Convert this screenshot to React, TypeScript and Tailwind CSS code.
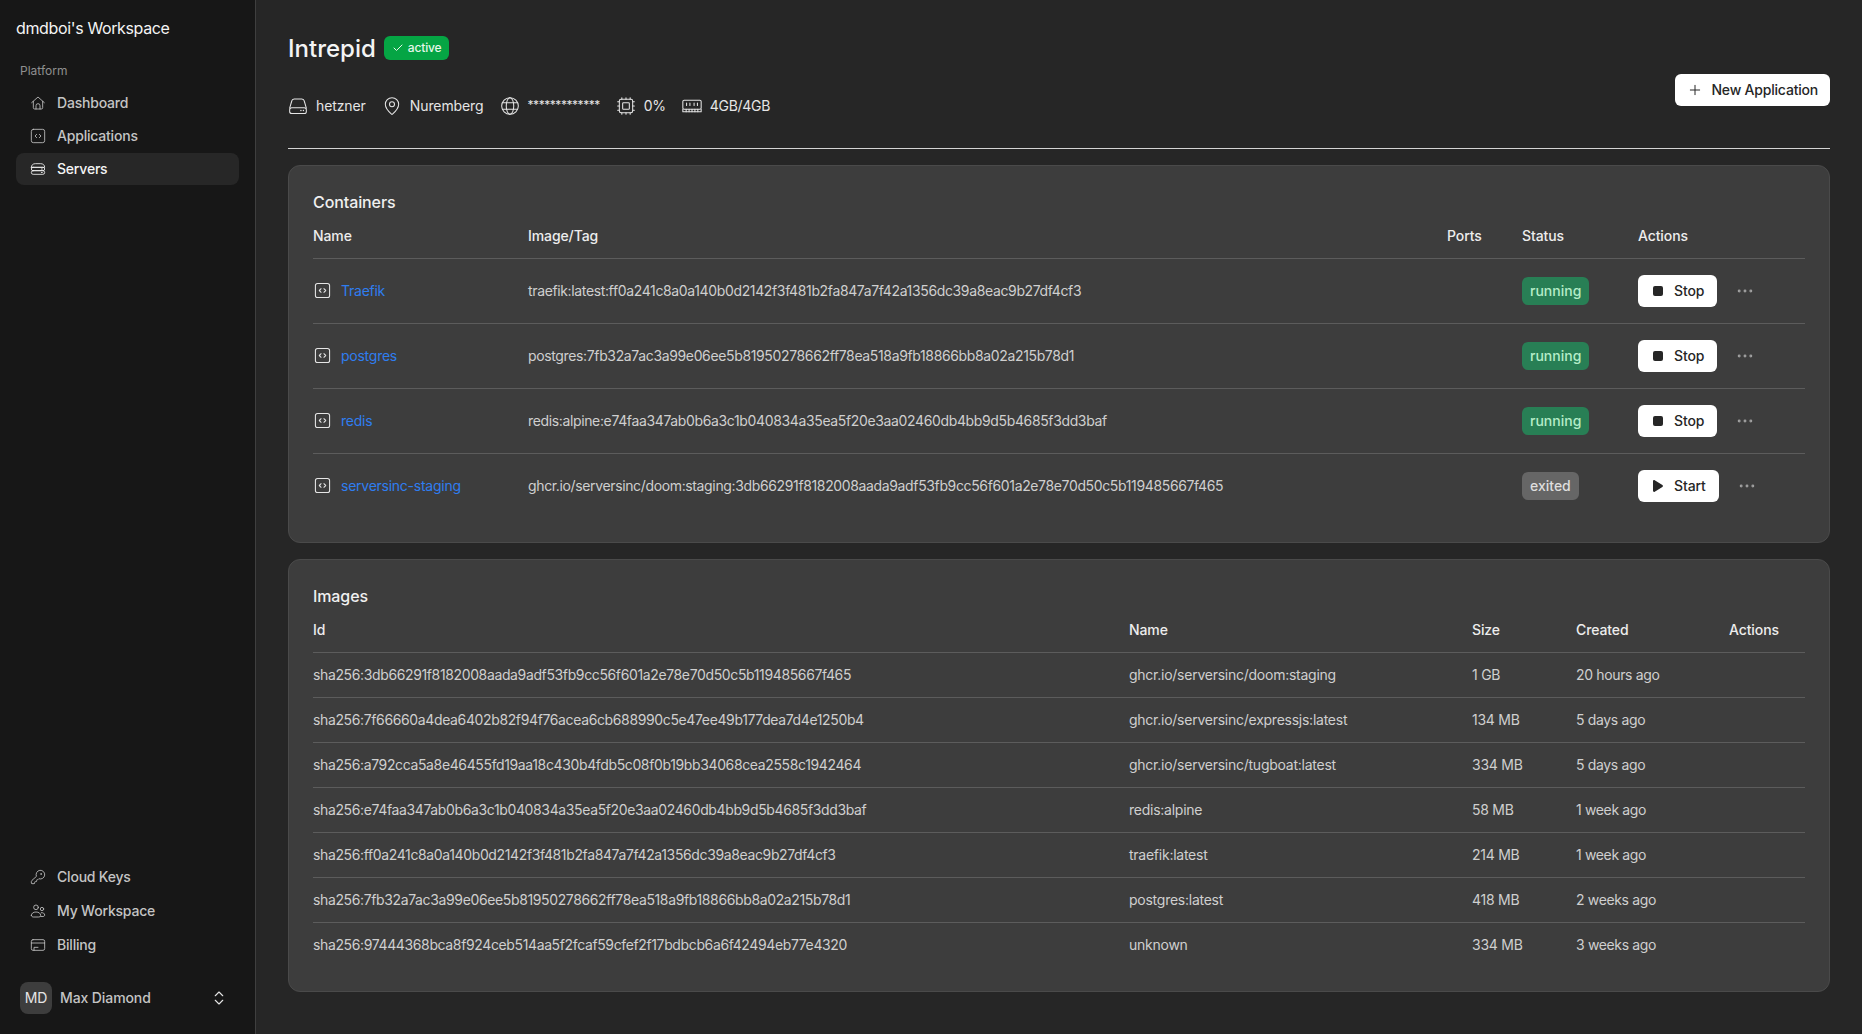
import React from 'react';
import { KeyRound, ChevronsUpDown, MapPin, Cpu, Check, Plus, Ellipsis } from 'lucide-react';

interface ContainerRow {
  name: string;
  image: string;
  status: 'running' | 'exited';
}

interface ImageRow {
  id: string;
  name: string;
  size: string;
  created: string;
}

const containers: ContainerRow[] = [
  { name: 'Traefik', image: 'traefik:latest:ff0a241c8a0a140b0d2142f3f481b2fa847a7f42a1356dc39a8eac9b27df4cf3', status: 'running' },
  { name: 'postgres', image: 'postgres:7fb32a7ac3a99e06ee5b81950278662ff78ea518a9fb18866bb8a02a215b78d1', status: 'running' },
  { name: 'redis', image: 'redis:alpine:e74faa347ab0b6a3c1b040834a35ea5f20e3aa02460db4bb9d5b4685f3dd3baf', status: 'running' },
  { name: 'serversinc-staging', image: 'ghcr.io/serversinc/doom:staging:3db66291f8182008aada9adf53fb9cc56f601a2e78e70d50c5b119485667f465', status: 'exited' },
];

const images: ImageRow[] = [
  { id: 'sha256:3db66291f8182008aada9adf53fb9cc56f601a2e78e70d50c5b119485667f465', name: 'ghcr.io/serversinc/doom:staging', size: '1 GB', created: '20 hours ago' },
  { id: 'sha256:7f66660a4dea6402b82f94f76acea6cb688990c5e47ee49b177dea7d4e1250b4', name: 'ghcr.io/serversinc/expressjs:latest', size: '134 MB', created: '5 days ago' },
  { id: 'sha256:a792cca5a8e46455fd19aa18c430b4fdb5c08f0b19bb34068cea2558c1942464', name: 'ghcr.io/serversinc/tugboat:latest', size: '334 MB', created: '5 days ago' },
  { id: 'sha256:e74faa347ab0b6a3c1b040834a35ea5f20e3aa02460db4bb9d5b4685f3dd3baf', name: 'redis:alpine', size: '58 MB', created: '1 week ago' },
  { id: 'sha256:ff0a241c8a0a140b0d2142f3f481b2fa847a7f42a1356dc39a8eac9b27df4cf3', name: 'traefik:latest', size: '214 MB', created: '1 week ago' },
  { id: 'sha256:7fb32a7ac3a99e06ee5b81950278662ff78ea518a9fb18866bb8a02a215b78d1', name: 'postgres:latest', size: '418 MB', created: '2 weeks ago' },
  { id: 'sha256:97444368bca8f924ceb514aa5f2fcaf59cfef2f17bdbcb6a6f42494eb77e4320', name: 'unknown', size: '334 MB', created: '3 weeks ago' },
];

type IconProps = { size?: number; strokeWidth?: number; className?: string };

const Svg: React.FC<IconProps & { children: React.ReactNode }> = ({ size = 16, strokeWidth = 1.25, className, children }) => (
  <svg
    width={size}
    height={size}
    viewBox="0 0 24 24"
    fill="none"
    stroke="currentColor"
    strokeWidth={strokeWidth}
    strokeLinecap="round"
    strokeLinejoin="round"
    className={className}
  >
    {children}
  </svg>
);

const HomeIcon: React.FC<IconProps> = (p) => (
  <Svg {...p}>
    <path d="M2.5 11.5 12 3l9.5 8.5" />
    <path d="M5 9.5V19a2 2 0 0 0 2 2h10a2 2 0 0 0 2-2V9.5" />
    <path d="M9 21v-5a3 3 0 0 1 6 0v5" />
  </Svg>
);

const CodeBoxIcon: React.FC<IconProps> = (p) => (
  <Svg {...p}>
    <rect x="2" y="2" width="20" height="20" rx="3" />
    <path d="m10 9.5-2.5 2.5 2.5 2.5" />
    <path d="m14 9.5 2.5 2.5-2.5 2.5" />
  </Svg>
);

const ServerStackIcon: React.FC<IconProps> = (p) => (
  <Svg {...p}>
    <path d="M2 9.5C2 6 4.5 4 8 4h8c3.500 0 6 2 6 5.500H2Z" />
    <rect x="2" y="9.500" width="20" height="5" rx="2.500" />
    <rect x="2" y="14.500" width="20" height="5.500" rx="2.750" />
    <path d="M17 12h1.500M17 17.250h1.500" />
  </Svg>
);

const UsersIcon: React.FC<IconProps> = (p) => (
  <Svg {...p}>
    <circle cx="9" cy="6.500" r="3.500" />
    <circle cx="18" cy="9" r="2.500" />
    <path d="M2 18.500c0-3 3-5 7-5s7 2 7 5c0 1.500-1.500 2.500-3 2.500H5c-1.500 0-3-1-3-2.500Z" />
    <path d="M17 14.500c2.800-.3 5 1.200 5 3.500 0 1.300-1 2.300-2.500 2.300H16" />
  </Svg>
);

const CardIcon: React.FC<IconProps> = (p) => (
  <Svg {...p}>
    <rect x="2" y="4" width="20" height="16" rx="2.500" />
    <path d="M2 9h20" />
    <path d="M6 20v-4.500h6" />
  </Svg>
);

const DriveIcon: React.FC<IconProps> = (p) => (
  <Svg {...p}>
    <path d="M2 14.500 4.500 6A3 3 0 0 1 7.400 3.500h9.200A3 3 0 0 1 19.500 6L22 14.500" />
    <rect x="2" y="14" width="20" height="7" rx="2.500" />
    <path d="M15.500 17.500h.01M18.500 17.500h.01" strokeWidth={1.75} />
  </Svg>
);

const GlobeIcon: React.FC<IconProps> = (p) => (
  <Svg {...p}>
    <circle cx="12" cy="12" r="10" />
    <ellipse cx="12" cy="12" rx="4.500" ry="10" />
    <path d="M3 8h18M3 16h18" />
  </Svg>
);

const RamIcon: React.FC<IconProps> = (p) => (
  <Svg {...p}>
    <rect x="1" y="5" width="22" height="11" rx="1.500" />
    <path d="M1 16v3h22v-3" />
    <path d="M5.500 8.500v3M9.500 8.500v3M14.500 8.500v3M18.500 8.500v3" />
    <path d="M5 16v3M8.500 16v3M12 16v3M15.500 16v3M19 16v3" />
  </Svg>
);

const NavItem: React.FC<{ icon: React.ElementType; label: string; active?: boolean; tall?: boolean }> = ({ icon: Icon, label, active, tall }) => (
  <a
    className={`flex items-center gap-[11px] rounded-lg px-[14px] text-sm font-medium tracking-[-0.2px] ${tall ? 'h-[34px]' : 'h-[32px]'} ${
      active ? 'bg-[#272727] text-[#f4f4f4]' : 'text-[#c4c4c4]'
    }`}
  >
    <Icon size={16} strokeWidth={1.25} className="shrink-0" />
    {label}
  </a>
);

const Meta: React.FC<{ icon: React.ElementType; children: React.ReactNode }> = ({ icon: Icon, children }) => (
  <div className="flex items-center gap-[8px] text-sm leading-[20px] tracking-[-0.1px] text-[#e5e5e5]">
    <Icon size={20} strokeWidth={1.25} className="shrink-0" />
    {children}
  </div>
);

export default function App() {
  return (
    <div className="flex h-[1034px] w-full overflow-hidden bg-[#262626] font-['Inter',sans-serif] text-[#e5e5e5]">
      {/* Sidebar */}
      <aside className="flex w-[256px] shrink-0 flex-col border-r border-[#3f3f3f] bg-[#171717] pb-[20px]">
        <div className="px-[16px] pt-[17px] text-base leading-[22px] tracking-[-0.36px] text-[#f4f4f4]">dmdboi's Workspace</div>
        <div className="px-[20px] pt-[24px] text-xs leading-[16px] text-[#8f8f8f]">Platform</div>
        <nav className="mt-[8px] flex flex-col gap-px px-[16px]">
          <NavItem icon={HomeIcon} label="Dashboard" />
          <NavItem icon={CodeBoxIcon} label="Applications" />
          <NavItem icon={ServerStackIcon} label="Servers" active />
        </nav>
        <nav className="mt-auto flex flex-col px-[16px]">
          <NavItem icon={KeyRound} label="Cloud Keys" tall />
          <NavItem icon={UsersIcon} label="My Workspace" tall />
          <NavItem icon={CardIcon} label="Billing" tall />
        </nav>
        <div className="mt-[20px] flex items-center px-[20px]">
          <div className="flex h-[32px] w-[32px] items-center justify-center rounded-lg bg-[#3d3d3d] text-sm text-[#e5e5e5]">MD</div>
          <span className="ml-[8px] text-sm font-medium tracking-[-0.1px] text-[#c4c4c4]">Max Diamond</span>
          <ChevronsUpDown size={18} strokeWidth={1.5} className="mr-[7px] ml-auto text-[#e5e5e5]" />
        </div>
      </aside>

      {/* Main */}
      <main className="flex min-w-0 flex-1 flex-col px-[32px] pt-[33px]">
        <header className="flex items-end justify-between border-b border-[#d4d4d4] pb-[32px]">
          <div>
            <div className="flex items-start gap-[8px]">
              <h1 className="pt-[1px] text-2xl leading-[30px] font-medium text-[#f4f4f4]">Intrepid</h1>
              <span className="mt-[3px] flex h-[24px] items-center gap-[4px] rounded-md bg-[#05a544] px-[8px] text-xs font-medium tracking-[-0.15px] text-[#e6f7ea]">
                <Check size={12} strokeWidth={2} />
                active
              </span>
            </div>
            <div className="mt-[32px] flex items-center gap-[16px]">
              <Meta icon={DriveIcon}>hetzner</Meta>
              <Meta icon={MapPin}>Nuremberg</Meta>
              <Meta icon={GlobeIcon}>
                <span className="mb-[3px] text-xs tracking-[-0.45px]">*************</span>
              </Meta>
              <Meta icon={Cpu}>
                <span className="tracking-[-0.3px]">0%</span>
              </Meta>
              <Meta icon={RamIcon}>
                <span className="tracking-[-0.3px]">4GB/4GB</span>
              </Meta>
            </div>
          </div>
          <button className="mb-[10px] flex h-[32px] items-center gap-[8px] rounded-md bg-white px-[12px] text-sm font-medium tracking-[-0.2px] text-[#262626]">
            <Plus size={16} strokeWidth={1.5} />
            New Application
          </button>
        </header>

        <section className="mt-[16px] rounded-xl border border-[#4a4a4a] bg-[#3d3d3d] px-[24px] pt-[24px] pb-[24px]">
          <h2 className="text-base leading-[24px] font-medium tracking-[-0.1px] text-[#f0f0f0]">Containers</h2>
          <table className="w-full table-fixed text-left text-sm">
            <colgroup>
              <col className="w-[215px]" />
              <col />
              <col className="w-[75px]" />
              <col className="w-[116px]" />
              <col className="w-[167px]" />
            </colgroup>
            <thead>
              <tr className="h-[44px] border-b border-[#5c5c5c] tracking-[-0.1px]">
                <th className="font-medium text-[#ededed]">Name</th>
                <th className="font-medium text-[#ededed]">Image/Tag</th>
                <th className="font-medium text-[#ededed]">Ports</th>
                <th className="font-medium text-[#ededed]">Status</th>
                <th className="font-medium text-[#ededed]">Actions</th>
              </tr>
            </thead>
            <tbody>
              {containers.map((c, i) => (
                <tr key={c.name} className={`h-[65px] ${i < containers.length - 1 ? 'border-b border-[#5c5c5c]' : ''}`}>
                  <td>
                    <div className="flex items-center gap-[10px] pl-[1px]">
                      <CodeBoxIcon size={17} strokeWidth={1.5} className="text-[#e5e5e5]" />
                      <a className="tracking-[-0.25px] text-[#2f7df0]">{c.name}</a>
                    </div>
                  </td>
                  <td className="whitespace-nowrap tracking-[-0.36px] text-[#cfcfcf]">{c.image}</td>
                  <td />
                  <td>
                    {c.status === 'running' ? (
                      <span className="inline-flex h-[28px] items-center rounded-md bg-[#287f55] px-[8px] font-medium text-[#b5edc8]">running</span>
                    ) : (
                      <span className="inline-flex h-[28px] items-center rounded-md bg-[#666666] px-[8px] font-medium text-[#dedede]">exited</span>
                    )}
                  </td>
                  <td>
                    <div className="flex items-center gap-[18px]">
                      <button className="flex h-[32px] items-center gap-[11px] rounded-md bg-white pr-[13px] pl-[15px] text-sm font-medium tracking-[-0.1px] text-[#262626]">
                        {c.status === 'running' ? (
                          <span className="h-[10px] w-[10px] rounded-[2px] bg-[#262626]" />
                        ) : (
                          <svg width="10" height="12" viewBox="0 0 10 12" className="text-[#262626]">
                            <path d="M0 1.200C0 .3 1 -.2 1.700.3l7.700 4.800c.7.400.7 1.400 0 1.800L1.700 11.700C1 12.200 0 11.700 0 10.800Z" fill="currentColor" />
                          </svg>
                        )}
                        {c.status === 'running' ? 'Stop' : 'Start'}
                      </button>
                      <Ellipsis size={20} strokeWidth={1.5} className="text-[#a0a0a0]" />
                    </div>
                  </td>
                </tr>
              ))}
            </tbody>
          </table>
        </section>

        <section className="mt-[16px] rounded-xl border border-[#4a4a4a] bg-[#3d3d3d] px-[24px] pt-[24px] pb-[24px]">
          <h2 className="text-base leading-[24px] font-medium tracking-[-0.1px] text-[#f0f0f0]">Images</h2>
          <table className="w-full table-fixed text-left text-sm">
            <colgroup>
              <col className="w-[816px]" />
              <col className="w-[343px]" />
              <col className="w-[104px]" />
              <col className="w-[153px]" />
              <col />
            </colgroup>
            <thead>
              <tr className="h-[44px] border-b border-[#5c5c5c] tracking-[-0.1px]">
                <th className="font-medium text-[#ededed]">Id</th>
                <th className="font-medium text-[#ededed]">Name</th>
                <th className="font-medium text-[#ededed]">Size</th>
                <th className="font-medium text-[#ededed]">Created</th>
                <th className="font-medium text-[#ededed]">Actions</th>
              </tr>
            </thead>
            <tbody>
              {images.map((img, i) => (
                <tr key={img.id} className={`h-[45px] tracking-[-0.25px] text-[#cfcfcf] ${i < images.length - 1 ? 'border-b border-[#5c5c5c]' : ''}`}>
                  <td className="whitespace-nowrap tracking-[-0.37px]">{img.id}</td>
                  <td className="whitespace-nowrap">{img.name}</td>
                  <td>{img.size}</td>
                  <td className="tracking-[-0.35px]">{img.created}</td>
                  <td />
                </tr>
              ))}
            </tbody>
          </table>
        </section>
      </main>
    </div>
  );
}
